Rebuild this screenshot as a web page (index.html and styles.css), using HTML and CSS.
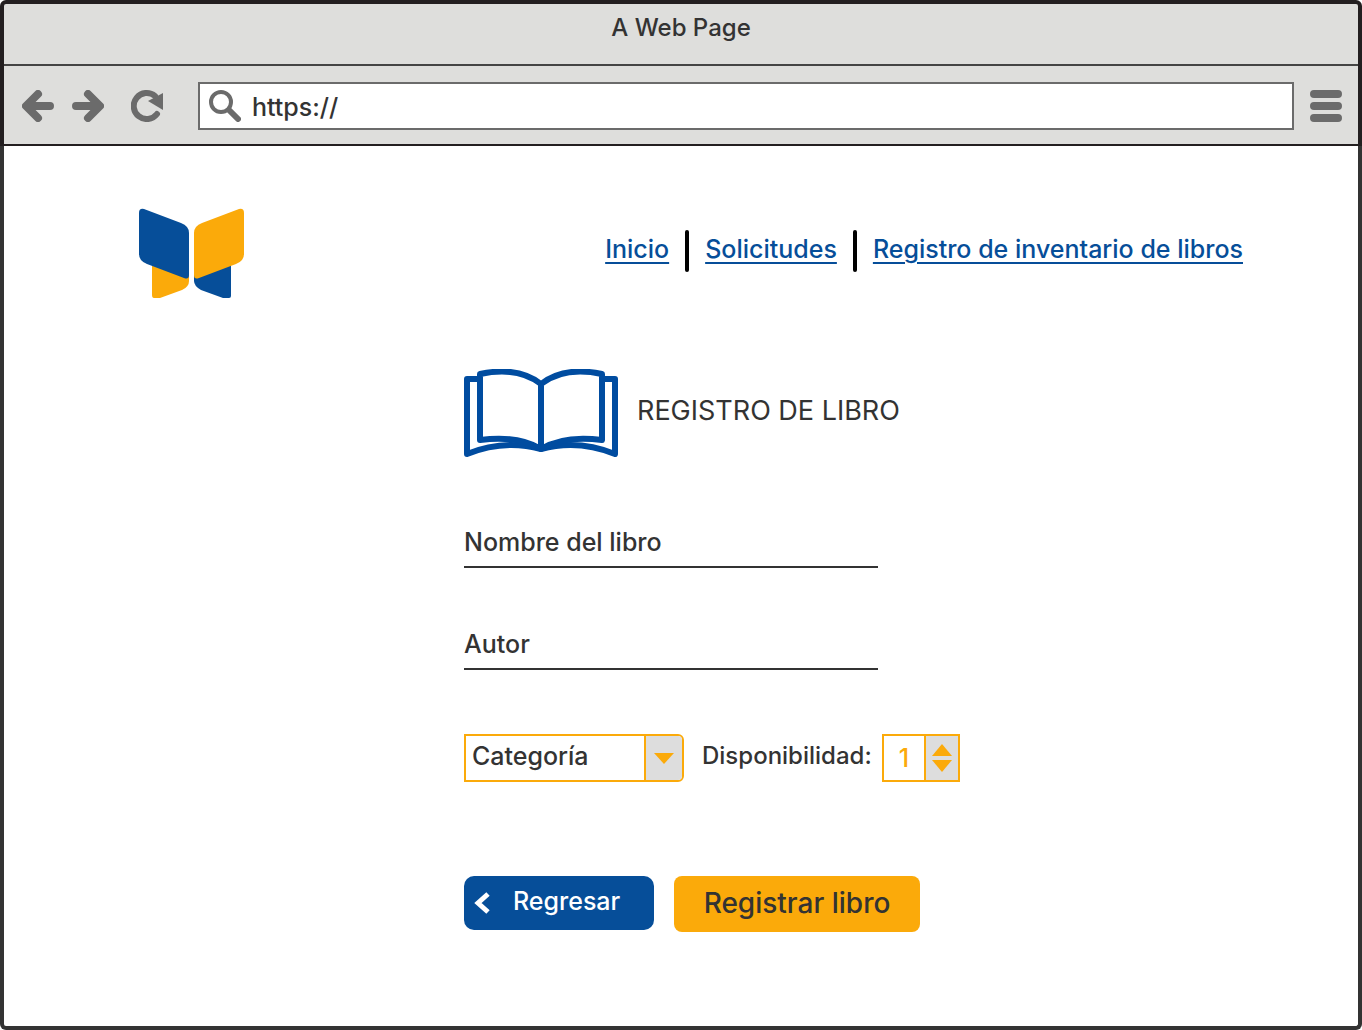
FILE: index.html
```html
<!DOCTYPE html>
<html lang="es">
<head>
  <meta charset="utf-8">
  <meta name="viewport" content="width=device-width, initial-scale=1">
  <title>Registro de libro</title>
  <link rel="stylesheet" href="styles.css">
</head>
<body>
  <div class="window">
    <header class="chrome">
      <div class="title-bar">A Web Page</div>
      <div class="toolbar">
        <button class="tool back" type="button" aria-label="Atrás">
          <svg width="32" height="32" viewBox="0 0 32 32" fill="none" stroke="currentColor" stroke-width="8" stroke-linecap="round" stroke-linejoin="round"><path d="M16 4 4 16l12 12M5 16h23"/></svg>
        </button>
        <button class="tool forward" type="button" aria-label="Adelante">
          <svg width="32" height="32" viewBox="0 0 32 32" fill="none" stroke="currentColor" stroke-width="8" stroke-linecap="round" stroke-linejoin="round"><path d="m16 4 12 12-12 12M27 16H4"/></svg>
        </button>
        <button class="tool reload" type="button" aria-label="Recargar">
          <svg width="32" height="32" viewBox="0 0 32 32"><path d="M26 24A13 13 0 1 1 24 6" fill="none" stroke="currentColor" stroke-width="6" stroke-linecap="round"/><path d="M32 3v17L17 11z" fill="currentColor"/></svg>
        </button>
        <div class="address">
          <svg width="32" height="32" viewBox="0 0 32 32" fill="none" stroke="currentColor" stroke-linecap="round"><circle cx="12" cy="12" r="10" stroke-width="4"/><path d="m20 20 9 9" stroke-width="6"/></svg>
          <input class="address-input" type="text" aria-label="Dirección" value="https://">
        </div>
        <button class="tool menu" type="button" aria-label="Menú">
          <svg width="32" height="32" viewBox="0 0 32 32" fill="none" stroke="currentColor" stroke-width="8" stroke-linecap="round"><path d="M4 4h24M4 16h24M4 28h24"/></svg>
        </button>
      </div>
    </header>

    <main class="page">
      <div class="site-header">
        <svg class="logo" role="img" aria-label="Biblioteca" width="106" height="90" viewBox="0 0 106 90">
          <path fill="#fbaa0a" d="M13 50 50 66v7q0 6-7 9L21 90h-6q-2 0-2-3z"/>
          <path fill="#064e99" d="M92 50 55 66v7q0 5 7 9l22 8h6q2 0 2-2z"/>
          <path fill="#064e99" d="M0 5Q0 0 5 1l37 14q8 3 8 10v42q0 5-5 3L8 56q-8-3-8-10z"/>
          <path fill="#fbaa0a" d="M105 5q0-5-5-4L63 15q-8 3-8 10v42q0 5 5 3l37-14q8-3 8-10z"/>
        </svg>
        <nav>
          <ul class="site-nav">
            <li><a href="#inicio">Inicio</a></li>
            <li><a href="#solicitudes">Solicitudes</a></li>
            <li><a href="#inventario">Registro de inventario de libros</a></li>
          </ul>
        </nav>
      </div>

      <form class="book-form">
        <div class="form-title">
          <svg width="154" height="88" viewBox="0 0 154 88" fill="none" stroke="#004ca0" stroke-width="6" stroke-linecap="round" stroke-linejoin="round">
            <path d="M16 10H3v75q37-15 74-5 37-10 74 5V10h-13"/>
            <path d="M77 15Q54-3 16 5v66q38-5 61 9 23-14 61-9V5Q100-3 77 15v64"/>
          </svg>
          <h1>REGISTRO DE LIBRO</h1>
        </div>
        <input class="line-input" type="text" placeholder="Nombre del libro" aria-label="Nombre del libro">
        <input class="line-input" type="text" placeholder="Autor" aria-label="Autor">
        <div class="options">
          <div class="select">
            <select aria-label="Categoría"><option>Categoría</option></select>
            <span class="select-arrow"><svg width="20" height="11" viewBox="0 0 20 11"><path d="M0 0h20L10 11z" fill="#fbaa0a"/></svg></span>
          </div>
          <label class="stock-label" for="stock">Disponibilidad:</label>
          <div class="stepper">
            <input id="stock" type="number" value="1" min="0">
            <div class="stepper-buttons">
              <button type="button" aria-label="Aumentar"><svg width="20" height="12" viewBox="0 0 20 12"><path d="M10 0 20 12H0z" fill="#fbaa0a"/></svg></button>
              <button type="button" aria-label="Disminuir"><svg width="20" height="12" viewBox="0 0 20 12"><path d="M0 0h20L10 12z" fill="#fbaa0a"/></svg></button>
            </div>
          </div>
        </div>
        <div class="actions">
          <button class="btn btn-back" type="button">
            <svg width="16" height="22" viewBox="0 0 16 22" fill="none" stroke="#fff" stroke-width="5"><path d="M14 2 4 11l10 9"/></svg>
            <span>Regresar</span>
          </button>
          <button class="btn btn-submit" type="submit">Registrar libro</button>
        </div>
      </form>
    </main>
  </div>
</body>
</html>
```
FILE: styles.css
```css
* { box-sizing: border-box; }

body {
  margin: 0;
  background: #fff;
  color: #333;
  font: 500 25px/32px Inter, "Noto Sans", sans-serif;
}

input, select, button {
  font: inherit;
  color: inherit;
  margin: 0;
  padding: 0;
  border: 0;
  background: none;
  border-radius: 0;
}

button { cursor: pointer; }
svg { display: block; flex: none; }

.window {
  min-height: 100vh;
  display: flex;
  flex-direction: column;
}

/* Browser chrome */
.chrome {
  background: #dededc;
  border: 4px solid #231f20;
  border-bottom-width: 2px;
  border-radius: 6px 6px 0 0;
}

.title-bar {
  height: 62px;
  padding-top: 8px;
  border-bottom: 2px solid #444;
  font-size: 24px;
  text-align: center;
}

.toolbar {
  height: 78px;
  padding: 2px 16px 0 18px;
  display: flex;
  align-items: center;
  color: #6b6b6b;
}

.forward { margin-left: 18px; }
.reload { margin-left: 27px; }
.menu { margin-left: 16px; }

.address {
  flex: 1;
  min-width: 0;
  height: 48px;
  margin-left: 35px;
  padding-left: 9px;
  display: flex;
  align-items: center;
  gap: 11px;
  background: #fff;
  border: 2px solid #6b6b6b;
}

.address-input {
  flex: 1;
  min-width: 0;
  padding-top: 2px;
  color: #333;
}

/* Page */
.page {
  flex: 1;
  padding: 62px 115px 94px 135px;
  border: 4px solid #333;
  border-top: 0;
  border-radius: 0 0 6px 6px;
}

.site-header {
  display: flex;
  justify-content: space-between;
  align-items: flex-start;
}

.site-nav {
  display: flex;
  gap: 16px;
  margin: 22px 0 0;
  padding: 0;
  list-style: none;
  line-height: 38px;
}

.site-nav li {
  display: flex;
  gap: 16px;
}

.site-nav a {
  color: #064e99;
  text-decoration-thickness: 2px;
  text-underline-offset: 4px;
}

.site-nav li + li::before {
  content: "";
  width: 4px;
  height: 42px;
  background: #000;
  border-radius: 2px;
}

.book-form {
  max-width: 496px;
  margin: 71px 0 0 325px;
}

.form-title {
  display: flex;
  align-items: center;
  gap: 19px;
}

.form-title h1 {
  margin: 0;
  padding-bottom: 4px;
  font-size: 27px;
  font-weight: 400;
  white-space: nowrap;
}

.line-input {
  display: block;
  width: 414px;
  max-width: 100%;
  height: 50px;
  margin-top: 52px;
  border-bottom: 2px solid #333;
}

.form-title + .line-input { margin-top: 61px; }
.line-input::placeholder { color: #333; opacity: 1; }

.options {
  display: flex;
  align-items: center;
  margin-top: 64px;
}

.select {
  display: grid;
  grid-template-columns: 1fr 38px;
  width: 220px;
  height: 48px;
  border: 2px solid #fbaa0a;
  border-radius: 0 6px 6px 0;
  overflow: hidden;
}

.select select {
  grid-area: 1 / 1 / 2 / 3;
  appearance: none;
  padding: 0 0 4px 6px;
}

.select-arrow {
  grid-area: 1 / 2;
  display: grid;
  place-items: center;
  background: #ddd;
  border-left: 2px solid #fbaa0a;
  pointer-events: none;
}

.stock-label {
  margin-left: 18px;
  padding-bottom: 4px;
  font-size: 24px;
}

.stepper {
  display: flex;
  width: 78px;
  height: 48px;
  margin-left: auto;
  border: 2px solid #fbaa0a;
}

.stepper input {
  flex: 1;
  min-width: 0;
  color: #fbaa0a;
  text-align: center;
  appearance: textfield;
}

.stepper input::-webkit-inner-spin-button { appearance: none; display: none; }

.stepper-buttons {
  width: 34px;
  display: flex;
  flex-direction: column;
  align-items: center;
  justify-content: center;
  gap: 4px;
  background: #ddd;
  border-left: 2px solid #fbaa0a;
}

.actions {
  display: flex;
  align-items: flex-start;
  gap: 20px;
  margin-top: 94px;
}

.btn-back {
  display: flex;
  align-items: center;
  width: 190px;
  height: 54px;
  padding-left: 10px;
  gap: 23px;
  background: #064e99;
  border-radius: 10px;
  color: #fff;
}

.btn-back span { padding-bottom: 4px; }

.btn-submit {
  width: 246px;
  height: 56px;
  padding-bottom: 2px;
  background: #fbaa0a;
  border-radius: 8px;
  font-size: 28px;
}
```
